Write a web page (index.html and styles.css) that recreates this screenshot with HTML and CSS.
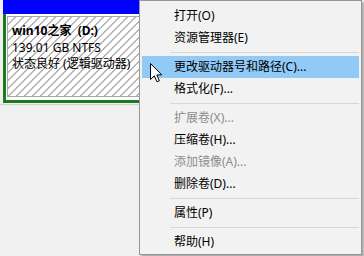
FILE: index.html
```html
<!DOCTYPE html>
<html>
<head>
	<meta charset="utf-8">
	<link rel="stylesheet" href="styles.css">
</head>
<body>
    <div class="volumes">
        <div class="disk">
            <div class="bar"></div>
            <div class="part">
                <div class="hatch">
                    <div class="vol_name">win10之家&nbsp;&nbsp;(D:)</div>
                    <div>139.01 GB NTFS</div>
                    <div>状态良好 (逻辑驱动器)</div>
                </div>
            </div>
        </div>
        <div class="rule"></div>
    </div>

    <div id="menu">
        <div class="item">打开(O)</div>
        <div class="item">资源管理器(E)</div>
        <div class="sep"></div>
        <div class="item hover">更改驱动器号和路径(C)...</div>
        <div class="item">格式化(F)...</div>
        <div class="sep"></div>
        <div class="item disabled">扩展卷(X)...</div>
        <div class="item">压缩卷(H)...</div>
        <div class="item disabled">添加镜像(A)...</div>
        <div class="item">删除卷(D)...</div>
        <div class="sep"></div>
        <div class="item">属性(P)</div>
        <div class="sep"></div>
        <div class="item">帮助(H)</div>
    </div>

    <!-- mouse pointer over the highlighted entry -->
    <svg class="cursor" width="13" height="20" viewBox="0 0 13 20">
        <path d="M0.5 0.5 L0.5 16.5 L4.3 12.8 L7 18.8 L9.4 17.8 L6.8 11.9 L11.8 11.9 Z" fill="#fff" stroke="#000" stroke-width="1" stroke-linejoin="miter"/>
    </svg>
</body>
</html>
```

FILE: styles.css
```css
body {
	margin: 0;
	background-color: #f0f0f0;
	font-family: "Noto Sans", "Noto Sans CJK SC", sans-serif;
	font-size: 12px;
	color: #000;
	overflow: hidden;
}
.volumes {
	padding-left: 3px;
	width: 340px;
}
.bar {
	height: 14px;
	background-color: #0000ff;
}
.part {
	border-left: 3px solid #1d7a1d;
	border-bottom: 3px solid #1d7a1d;
	background-color: #fff;
	padding: 2px 0 3px 1px;
}
.hatch {
	height: 73px;
	border: 1px solid #a8a8a8;
	padding: 6px 0 0 4px;
	line-height: 16.5px;
	background-color: #fff;
	background-image: repeating-linear-gradient(135deg, #fff 0 4.6px, #b4b4b4 4.6px 5.66px);
}
.vol_name {
	font-weight: bold;
}
.rule {
	margin-top: 1px;
	height: 1px;
	background-color: #d2d2d2;
	margin-left: -3px;
}
#menu {
	position: absolute;
	left: 139px;
	top: 0;
	width: 223px;
	box-sizing: border-box;
	padding: 4px 2px 1px 2px;
	background-color: #f2f2f2;
	border: 1px solid #979797;
	box-shadow: 2px 2px 2px rgba(0, 0, 0, 0.3);
}
.item {
	height: 22px;
	line-height: 22px;
	padding-left: 32px;
	white-space: nowrap;
}
.hover {
	background-color: #91c9f7;
}
.disabled {
	color: #8d8d8d;
}
.sep {
	height: 1px;
	margin: 3px 0 3px 28px;
	background-color: #d7d7d7;
}
.cursor {
	position: absolute;
	left: 150px;
	top: 63px;
}
```
